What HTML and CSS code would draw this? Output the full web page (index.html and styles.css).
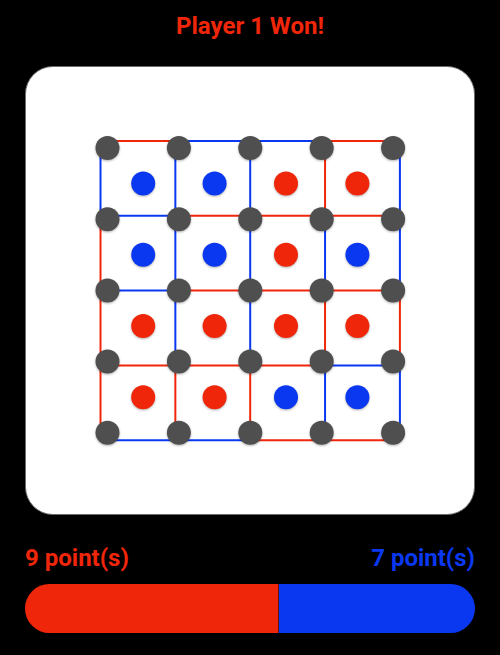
FILE: index.html
```html
<!DOCTYPE html>
<html lang="en">
<head>
  <meta charset="UTF-8" />
  <title>Dots and Boxes</title>
  <link rel="stylesheet" href="styles.css">
</head>
<body>

  <div id="game">
    <h1 class="status p1">Player 1 Won!</h1>

    <div class="board">
      <svg id="grid" width="448" height="447" viewBox="26 67 448 447"></svg>
    </div>

    <div class="scores">
      <span class="p1">9 point(s)</span>
      <span class="p2">7 point(s)</span>
    </div>

    <div class="bar">
      <div class="bar-part red" style="width: 56.25%"></div>
      <div class="bar-part blue"></div>
    </div>
  </div>

  <script>
    const svg = document.getElementById("grid");
    const NS = "http://www.w3.org/2000/svg";

    // r = player 1, b = player 2
    const hLines = ["rbbr", "brrr", "brrr", "rrrb", "bbrr"];
    const vLines = ["brrr", "bbbr", "bbbr", "rbrb", "bbrb"];
    const boxes = ["bbrr", "bbrb", "rrrr", "rrbb"];

    const lx = i => 100.5 + 74.85 * i;
    const ly = j => 141 + 74.8 * j;
    const dx = i => 107.5 + 71.4 * i;
    const dy = j => 148 + 71.2 * j;

    function add(tag, attrs) {
      const el = document.createElementNS(NS, tag);
      for (const k in attrs) el.setAttribute(k, attrs[k]);
      svg.appendChild(el);
    }

    hLines.forEach((row, j) => {
      [...row].forEach((c, i) => {
        add("line", { x1: lx(i), y1: ly(j), x2: lx(i + 1), y2: ly(j), class: "edge " + c });
      });
    });

    vLines.forEach((col, i) => {
      [...col].forEach((c, j) => {
        add("line", { x1: lx(i), y1: ly(j), x2: lx(i), y2: ly(j + 1), class: "edge " + c });
      });
    });

    boxes.forEach((row, j) => {
      [...row].forEach((c, i) => {
        add("circle", { cx: (dx(i) + dx(i + 1)) / 2, cy: (dy(j) + dy(j + 1)) / 2, r: 12, class: "owner " + c });
      });
    });

    for (let j = 0; j < 5; j++) {
      for (let i = 0; i < 5; i++) {
        add("circle", { cx: dx(i), cy: dy(j), r: 12, class: "dot" });
      }
    }
  </script>

</body>
</html>
```

FILE: styles.css
```css
body {
  margin: 0;
  background: #000;
  font-family: Roboto, "Liberation Sans", sans-serif;
}

#game {
  padding: 0 25px;
}

.p1 {
  color: #f0260a;
}

.p2 {
  color: #0a38f0;
}

.status {
  margin: 0;
  padding-top: 12px;
  text-align: center;
  font-size: 24px;
  line-height: 28px;
  font-weight: bold;
}

.board {
  margin-top: 26px;
  height: 447px;
  background: #fff;
  border: 1px solid #6b6b6b;
  border-radius: 28px;
}

.board svg {
  display: block;
}

.edge {
  stroke-width: 2;
}

.edge.r {
  stroke: #f0260a;
}

.edge.b {
  stroke: #0a38f0;
}

.owner.r {
  fill: #f0260a;
}

.owner.b {
  fill: #0a38f0;
}

.owner,
.dot {
  filter: drop-shadow(0 1px 1px rgba(0, 0, 0, 0.3));
}

.dot {
  fill: #4f4f4f;
}

.scores {
  display: flex;
  justify-content: space-between;
  margin-top: 29px;
  font-size: 24px;
  line-height: 28px;
  font-weight: bold;
}

.bar {
  display: flex;
  margin-top: 12px;
  height: 49px;
  border-radius: 25px;
  overflow: hidden;
}

.bar-part.red {
  background: #f0260a;
  border-right: 1px solid #6a1005;
}

.bar-part.blue {
  flex: 1;
  background: #0a38f0;
}
```
